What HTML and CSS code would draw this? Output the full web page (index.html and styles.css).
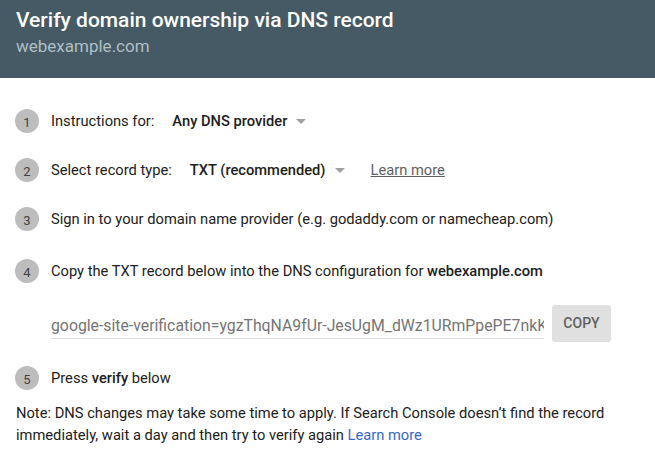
FILE: index.html
```html
<!DOCTYPE html>
<html>
<head>
<meta charset="utf-8">
<link rel="stylesheet" href="styles.css">
</head>
<body>
<div class="page">
  <header class="header">
    <div class="title">Verify domain ownership via DNS record</div>
    <div class="subtitle">webexample.com</div>
  </header>
  <main class="content">
    <div class="step">
      <span class="num">1</span>
      <span class="label">Instructions for:</span>
      <span class="select">Any DNS provider <span class="caret"></span></span>
    </div>
    <div class="step">
      <span class="num">2</span>
      <span class="label">Select record type:</span>
      <span class="select">TXT (recommended) <span class="caret"></span></span>
      <a class="learn-gray">Learn more</a>
    </div>
    <div class="step step-3">
      <span class="num">3</span>
      <span class="label">Sign in to your domain name provider (e.g. godaddy.com or namecheap.com)</span>
    </div>
    <div class="step step-4">
      <span class="num">4</span>
      <span class="label">Copy the TXT record below into the DNS configuration for <b>webexample.com</b></span>
    </div>
    <div class="record">
      <div class="field">google-site-verification=ygzThqNA9fUr-JesUgM_dWz1URmPpePE7nkK</div>
      <button class="copy">COPY</button>
    </div>
    <div class="step step-5">
      <span class="num">5</span>
      <span class="label">Press <b>verify</b> below</span>
    </div>
    <p class="note">Note: DNS changes may take some time to apply. If Search Console doesn’t find the record immediately, wait a day and then try to verify again <a class="learn-blue">Learn more</a></p>
  </main>
</div>
</body>
</html>
```
FILE: styles.css
```css
* { box-sizing: border-box; }
html, body { margin: 0; padding: 0; background: #fff; }
body { font-family: Roboto, "Liberation Sans", sans-serif; color: #212121; width: 655px; height: 463px; overflow: hidden; }
.header { background: #455a64; height: 78px; padding: 7px 16px 0 16px; }
.title { color: #fff; font-size: 21px; font-weight: 500; line-height: 27px; }
.subtitle { color: #b0bec5; font-size: 17px; line-height: 24px; }
.content { padding: 31px 16px 0 15px; }
.step { display: flex; align-items: center; height: 24px; margin-bottom: 25px; font-size: 14.7px; }
.step-3 { margin-bottom: 28px; }
.step-4 { margin-bottom: 21px; }
.step-5 { margin-bottom: 12px; }
.num { width: 24px; height: 24px; border-radius: 50%; background: #bdbdbd; color: #424242; font-size: 13px; display: flex; align-items: center; justify-content: center; margin-right: 12px; flex: none; padding-top: 3px; }
.label { white-space: nowrap; }
.select { font-weight: 500; margin-left: 18px; display: flex; align-items: center; color: #212121; }
.caret { width: 0; height: 0; border-left: 5px solid transparent; border-right: 5px solid transparent; border-top: 5px solid #a0a0a0; margin-left: 9px; }
.learn-gray { margin-left: 26px; color: #616161; text-decoration: underline; }
b { font-weight: 500; }
.record { display: flex; align-items: center; margin: 0 0 24px 36px; height: 38px; }
.field { width: 493px; font-size: 15.8px; color: #757575; white-space: nowrap; overflow: hidden; border-bottom: 1px solid #dedede; padding-bottom: 3px; margin-top: 8px; }
.copy { margin-left: 8px; width: 59px; height: 37px; background: #e0e0e0; border: none; border-radius: 3px; color: #616161; font-family: Roboto, "Liberation Sans", sans-serif; font-weight: 500; font-size: 14px; padding: 0; }
.note { margin: 0 0 0 1px; font-size: 14.7px; line-height: 22px; }
.learn-blue { color: #3367d6; }
```
